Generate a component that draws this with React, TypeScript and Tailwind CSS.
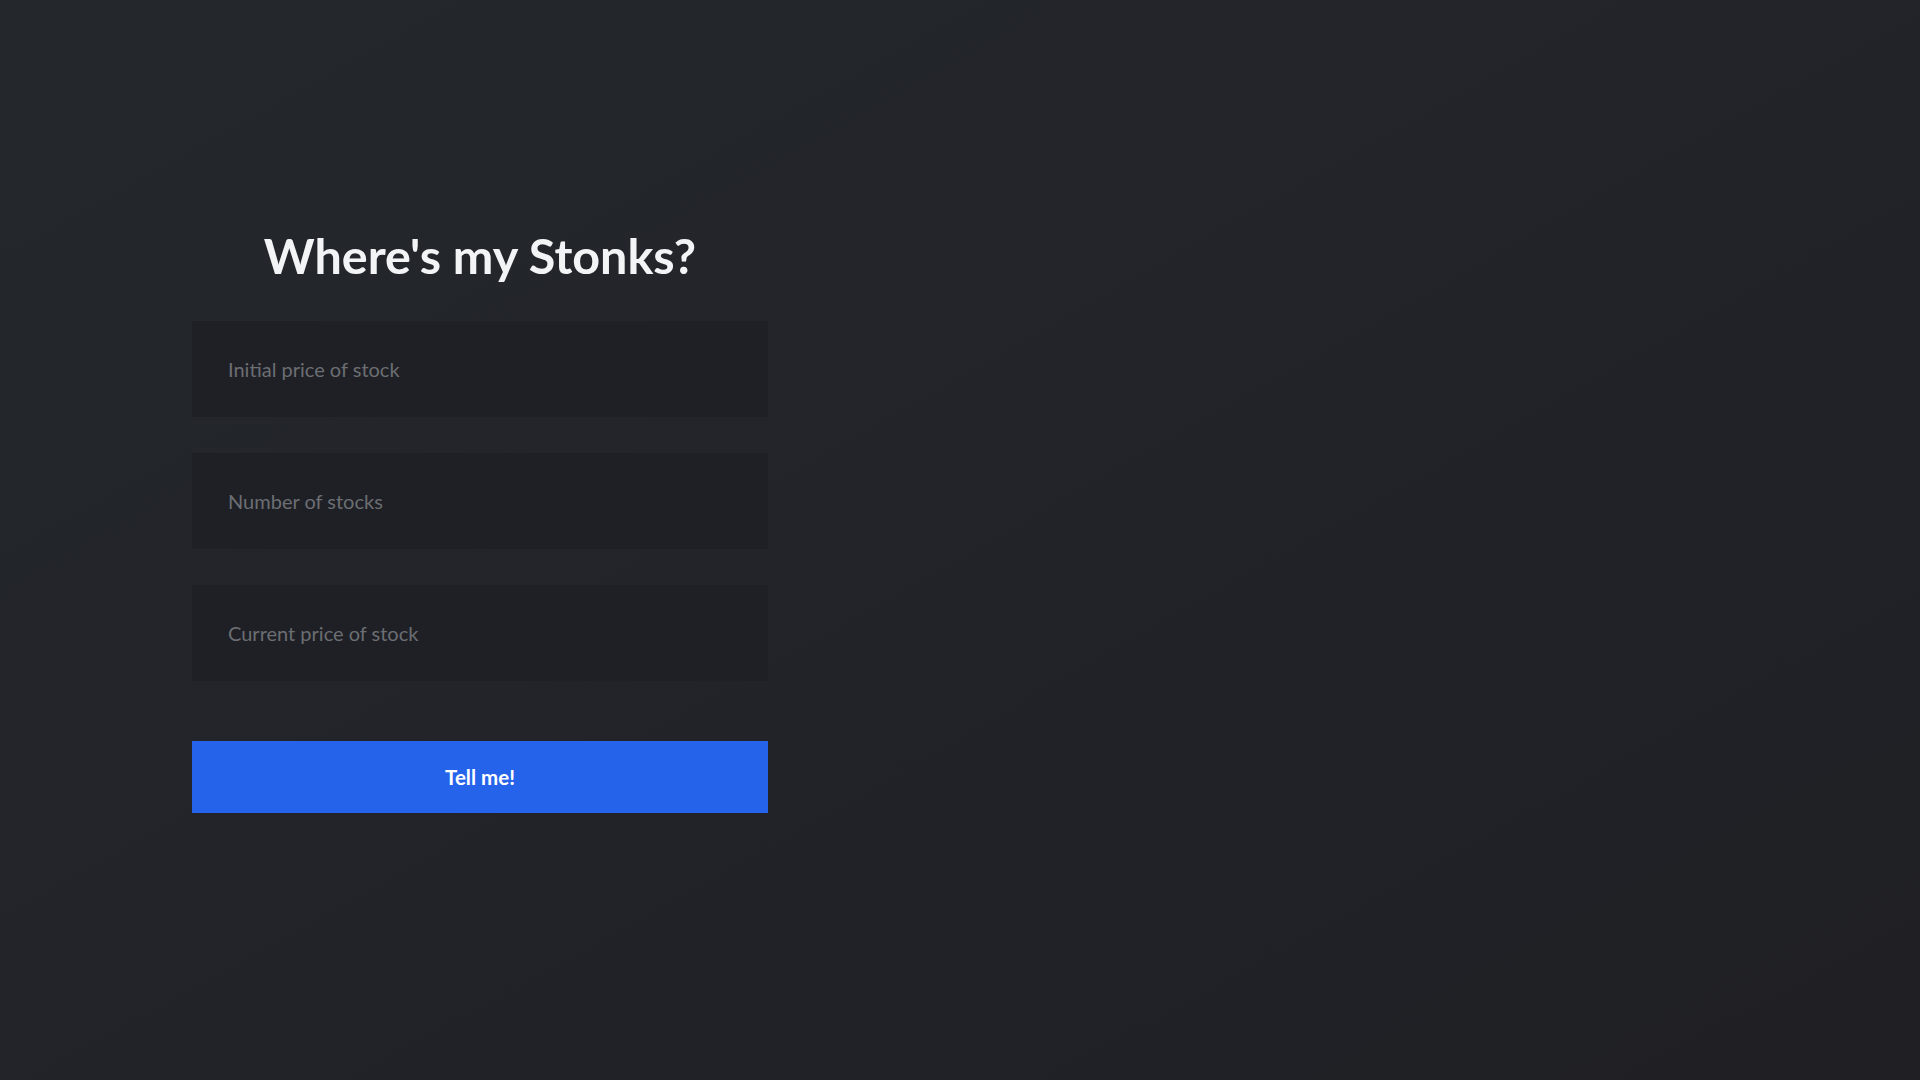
import React from 'react';

const fields = ['Initial price of stock', 'Number of stocks', 'Current price of stock'];

const App: React.FC = () => {
  return (
    <div
      className="min-h-screen w-full bg-gradient-to-br from-[#24282d] to-[#1f1f24]"
      style={{ fontFamily: 'Lato, "Open Sans", sans-serif' }}
    >
      <form
        className="ml-[192px] w-[576px] pt-[231px] flex flex-col"
        onSubmit={(e) => e.preventDefault()}
      >
        <h1 className="text-center text-[48.5px] leading-[48px] font-bold text-[#f3f4f6] mb-[42px]">
          Where's my Stonks?
        </h1>
        <div className="flex flex-col gap-[36px]">
          {fields.map((f) => (
            <input
              key={f}
              type="number"
              placeholder={f}
              className="h-[96px] w-full bg-[#1f2026] pl-[36px] text-[20px] text-gray-200 placeholder:text-[#6b6e72] outline-none"
            />
          ))}
        </div>
        <button
          type="submit"
          className="mt-[60px] h-[72px] w-full bg-[#2563eb] text-white text-[20.5px] font-bold"
        >
          Tell me!
        </button>
      </form>
    </div>
  );
};

export default App;
